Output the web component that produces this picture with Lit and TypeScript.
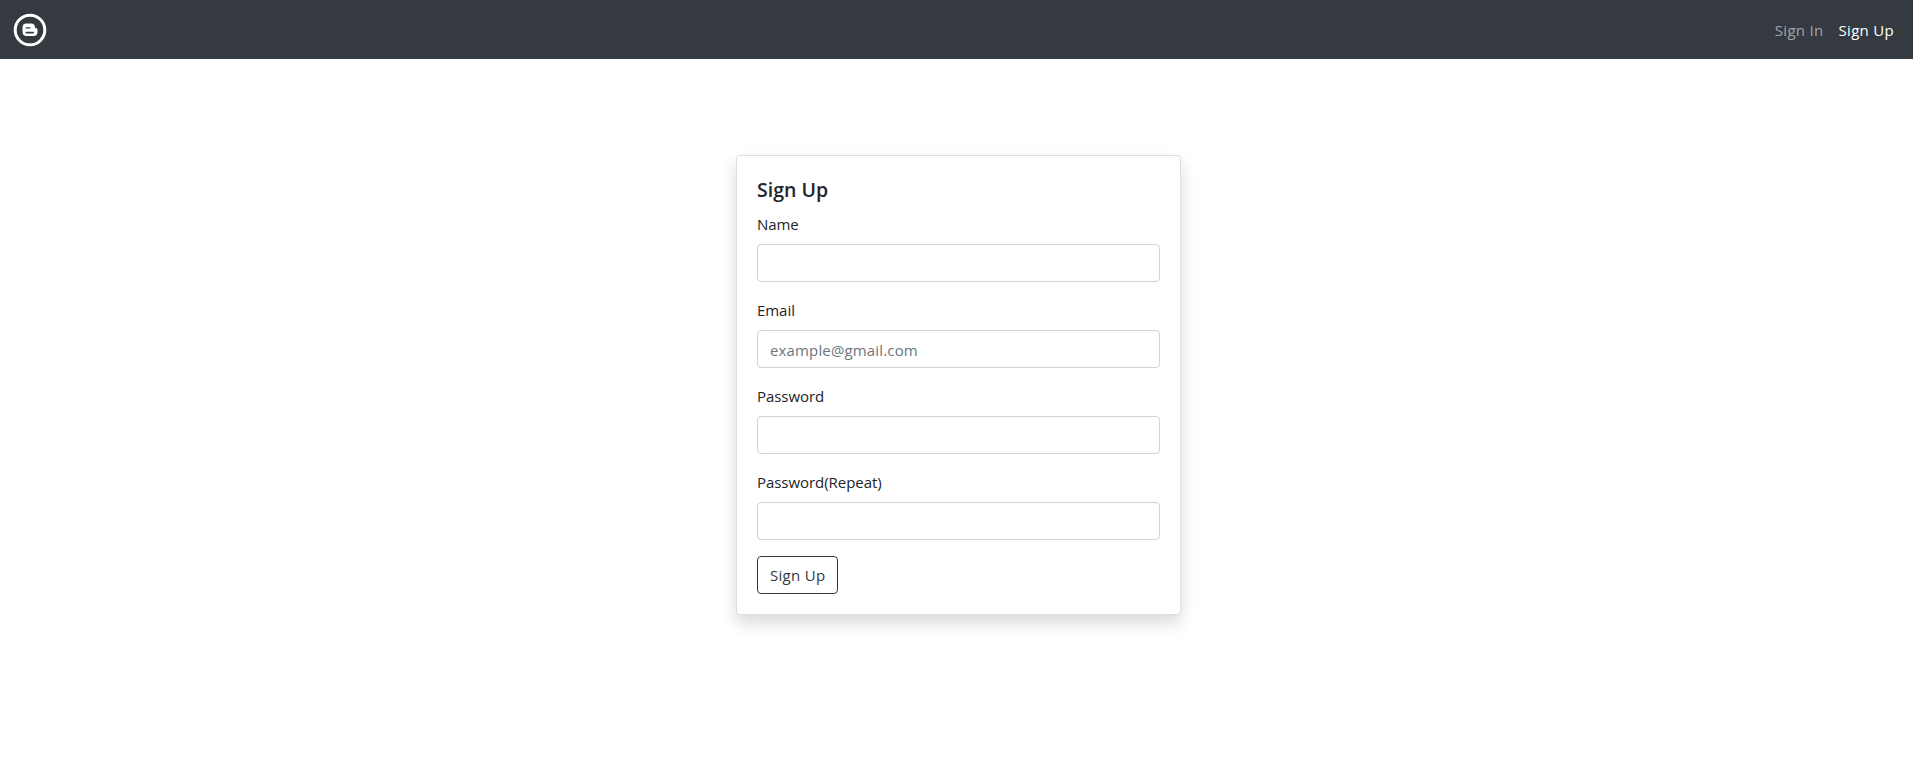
import { LitElement, html, css } from 'lit';
import { customElement } from 'lit/decorators.js';

@customElement('app-root')
export class AppRoot extends LitElement {
  static styles = css`
    :host {
      display: block;
      min-height: 780px;
      background: #fff;
      color: #212529;
      font-family: 'Open Sans', 'Noto Sans', sans-serif;
      font-size: 15px;
      line-height: 24px;
    }

    .navbar {
      display: flex;
      align-items: center;
      justify-content: space-between;
      height: 59px;
      padding: 0 12px 0 13px;
      background: #343a40;
    }

    .brand {
      display: flex;
    }

    .links {
      display: flex;
      gap: 15px;
      padding-right: 7px;
      letter-spacing: 0.3px;
    }

    .links a {
      color: rgba(255, 255, 255, 0.55);
      text-decoration: none;
    }

    .links a.active {
      color: #fff;
    }

    main {
      display: flex;
      justify-content: center;
      padding: 96px 0 0 4px;
    }

    .card {
      box-sizing: border-box;
      width: 445px;
      height: 460px;
      padding: 20px;
      background: #fff;
      border: 1px solid rgba(0, 0, 0, 0.125);
      border-radius: 4px;
      box-shadow: 0 8px 16px rgba(0, 0, 0, 0.15);
    }

    h5 {
      margin: 0 0 8px;
      font-size: 19.5px;
      font-weight: 600;
      line-height: 28px;
    }

    .field {
      margin-bottom: 16px;
    }

    label {
      display: block;
      margin-bottom: 8px;
      letter-spacing: -0.05px;
    }

    input {
      display: block;
      box-sizing: border-box;
      width: 100%;
      height: 38px;
      padding: 7px 12px 5px;
      font: inherit;
      letter-spacing: 0.15px;
      color: #212529;
      background: #fff;
      border: 1px solid #ced4da;
      border-radius: 4px;
      outline: none;
    }

    input::placeholder {
      color: #6c757d;
      opacity: 1;
    }

    button {
      display: block;
      box-sizing: border-box;
      height: 38px;
      padding: 6px 12px;
      font: inherit;
      letter-spacing: 0.3px;
      color: #343a40;
      background: transparent;
      border: 1px solid #343a40;
      border-radius: 4px;
    }
  `;

  render() {
    return html`
      <nav class="navbar">
        <a class="brand" href="#" aria-label="Home">
          <svg width="34" height="34" viewBox="0 0 34 34" fill="none">
            <circle cx="17" cy="17" r="14.8" stroke="#fff" stroke-width="3" />
            <path
              fill="#fff"
              fill-rule="evenodd"
              d="M13 10.5h5a4 4 0 0 1 4 3.6c0 .8.5 1.2 1.1 1.2.9 0 1.4.6 1.4 1.4v2.3a4 4 0 0 1-4 4h-7.5a4 4 0 0 1-3.5-4v-4.5a4 4 0 0 1 4-4zM13.2 14.2a.7.7 0 0 0 0 1.4h3.6a.7.7 0 0 0 0-1.4zM13.2 18.8a.8.8 0 0 0 0 1.6h7a.8.8 0 0 0 0-1.6z"
            />
          </svg>
        </a>
        <div class="links">
          <a href="#">Sign In</a>
          <a class="active" href="#">Sign Up</a>
        </div>
      </nav>
      <main>
        <form class="card" @submit=${(e: Event) => e.preventDefault()}>
          <h5>Sign Up</h5>
          <div class="field">
            <label for="name">Name</label>
            <input id="name" type="text" />
          </div>
          <div class="field">
            <label for="email">Email</label>
            <input id="email" type="email" placeholder="example@gmail.com" />
          </div>
          <div class="field">
            <label for="password">Password</label>
            <input id="password" type="password" />
          </div>
          <div class="field">
            <label for="repeat">Password(Repeat)</label>
            <input id="repeat" type="password" />
          </div>
          <button type="submit">Sign Up</button>
        </form>
      </main>
    `;
  }
}
